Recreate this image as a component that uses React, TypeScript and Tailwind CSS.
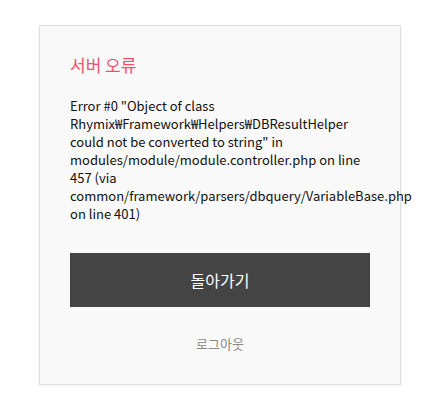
import React from "react";

export default function App() {
  return (
    <div className="w-[442px] h-[418px] bg-white" style={{ fontFamily: '"Noto Sans CJK KR", "Noto Sans", sans-serif' }}>
      <div className="pt-[25px]">
        <div className="ml-[39px] w-[362px] border border-[#dddddd] bg-[#f9f9f9] px-[30px] pt-[27px] pb-[31px] shadow-[0_1px_3px_rgba(0,0,0,0.06)]">
          <h1 className="text-[17px] leading-[24px] text-[#f0506e] font-normal">서버 오류</h1>
          <p className="mt-[20px] text-[13px] leading-[18px] text-[#111] break-normal">
            Error #0 "Object of class Rhymix₩Framework₩Helpers₩DBResultHelper could not be converted to string" in modules/module/module.controller.php on line 457 (via common/framework/parsers/dbquery/VariableBase.php on line 401)
          </p>
          <button className="mt-[30px] w-[300px] h-[54px] bg-[#444444] text-white text-[16px]">돌아가기</button>
          <div className="mt-[28px] text-center text-[13px] leading-[18px] text-[#888888]">로그아웃</div>
        </div>
      </div>
    </div>
  );
}
